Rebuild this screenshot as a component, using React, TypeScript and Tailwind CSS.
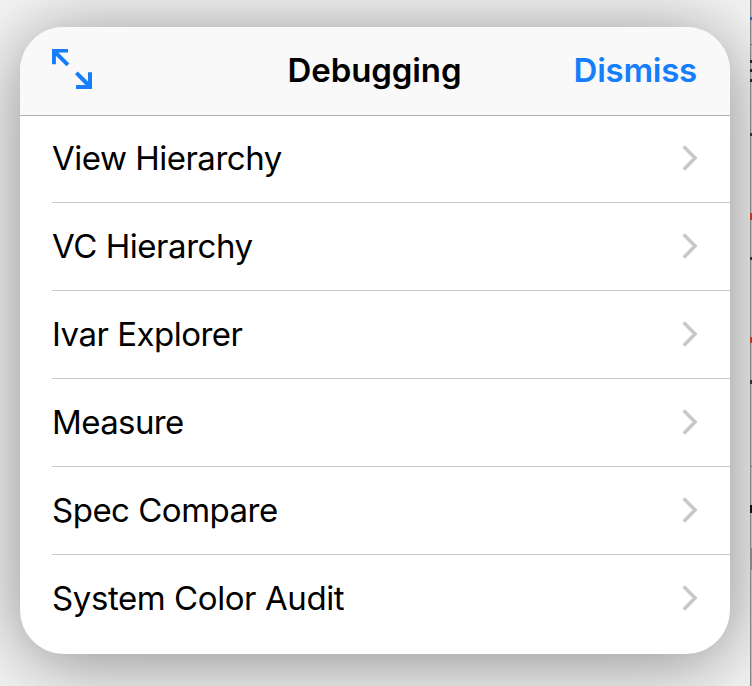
const rows = [
  { label: 'View Hierarchy', spacing: 'tracking-[-0.5px]', box: 'h-[87px] pb-[3px] border-b' },
  { label: 'VC Hierarchy', spacing: 'tracking-[-0.45px]', box: 'h-[88px] pb-[2px] border-b' },
  { label: 'Ivar Explorer', spacing: 'tracking-[-0.5px]', box: 'h-[88px] pb-[2px] border-b' },
  { label: 'Measure', spacing: 'tracking-[-0.6px]', box: 'h-[88px] pb-[2px] border-b' },
  { label: 'Spec Compare', spacing: 'tracking-[-0.5px]', box: 'h-[88px] pb-[2px] border-b' },
  { label: 'System Color Audit', spacing: 'tracking-[-0.42px]', box: 'h-[88px] pb-[3px]' },
];

const edgeMarks = [
  'top-[17px] h-[3px] bg-[#2f62ad]',
  'top-[44px] h-px bg-[#777777]',
  'top-[60px] h-[3px] bg-[#222222]',
  'top-[69px] h-[3px] bg-[#222222]',
  'top-[79px] h-[3px] bg-[#222222]',
  'top-[133px] h-[3px] bg-[#333333]',
  'top-[213px] h-[7px] bg-[#b83a25]',
  'top-[257px] h-[3px] bg-[#333333]',
  'top-[337px] h-[6px] bg-[#b83a25]',
  'top-[380px] h-[4px] bg-[#333333]',
  'top-[466px] h-px bg-[#777777]',
  'top-[505px] h-[8px] bg-[#111111]',
  'top-[548px] h-[22px] bg-[#858585]',
];

function ExpandIcon() {
  return (
    <svg width="42" height="42" viewBox="0 0 42 42" fill="none" stroke="#147efb" strokeWidth="4" aria-hidden="true">
      <path d="M1 1H17V4.6H7.4L18.3 15.5L15.5 18.3L4.9 7.7V16.3H1Z" fill="#147efb" stroke="none" />
      <path d="M41 41H25V37H34.4L24 26.3L26.8 23.4L37 33.6V24.3H41Z" fill="#147efb" stroke="none" />
    </svg>
  );
}

function Chevron() {
  return (
    <svg width="16" height="28" viewBox="0 0 16 28" fill="none" stroke="#c7c7cc" strokeWidth="3.6" aria-hidden="true">
      <path d="M1.7 2.4L13.1 14L1.7 25.6" />
    </svg>
  );
}

export default function App() {
  return (
    <div className="relative h-[686px] w-[752px] overflow-hidden bg-[#f5f5f5] pl-[20px] pt-[27px] font-['Inter',sans-serif] text-black">
      <main className="h-[627px] w-[710px] overflow-hidden rounded-[44px] bg-white shadow-[0_8px_76px_rgba(0,0,0,0.44)]">
        <header className="grid h-[89px] grid-cols-[1fr_auto_1fr] items-center border-b border-[#b0b0b0] bg-[#f9f9f9] pl-[31px] pr-[33px]">
          <button className="mt-[-4px] justify-self-start"><ExpandIcon /></button>
          <h1 className="pb-[3px] pl-px text-[33px] font-semibold leading-[40px] tracking-[-0.1px]">Debugging</h1>
          <button className="justify-self-end pb-[3px] text-[33px] font-semibold leading-[40px] tracking-[-0.25px] text-[#147efb]">Dismiss</button>
        </header>
        <ul>
          {rows.map((row) => (
            <li key={row.label} className={`ml-[32px] flex items-center justify-between border-[#c8c7cc] pr-[32px] ${row.box}`}>
              <span className={`text-[33px] leading-[40px] ${row.spacing}`}>{row.label}</span>
              <Chevron />
            </li>
          ))}
        </ul>
      </main>
      <div className="absolute right-0 top-0 h-full w-[2px] border-l border-[#858585] bg-[#b8b8b8]">
        {edgeMarks.map((mark) => (
          <span key={mark} className={`absolute left-[-1px] w-[2px] ${mark}`} />
        ))}
      </div>
    </div>
  );
}
